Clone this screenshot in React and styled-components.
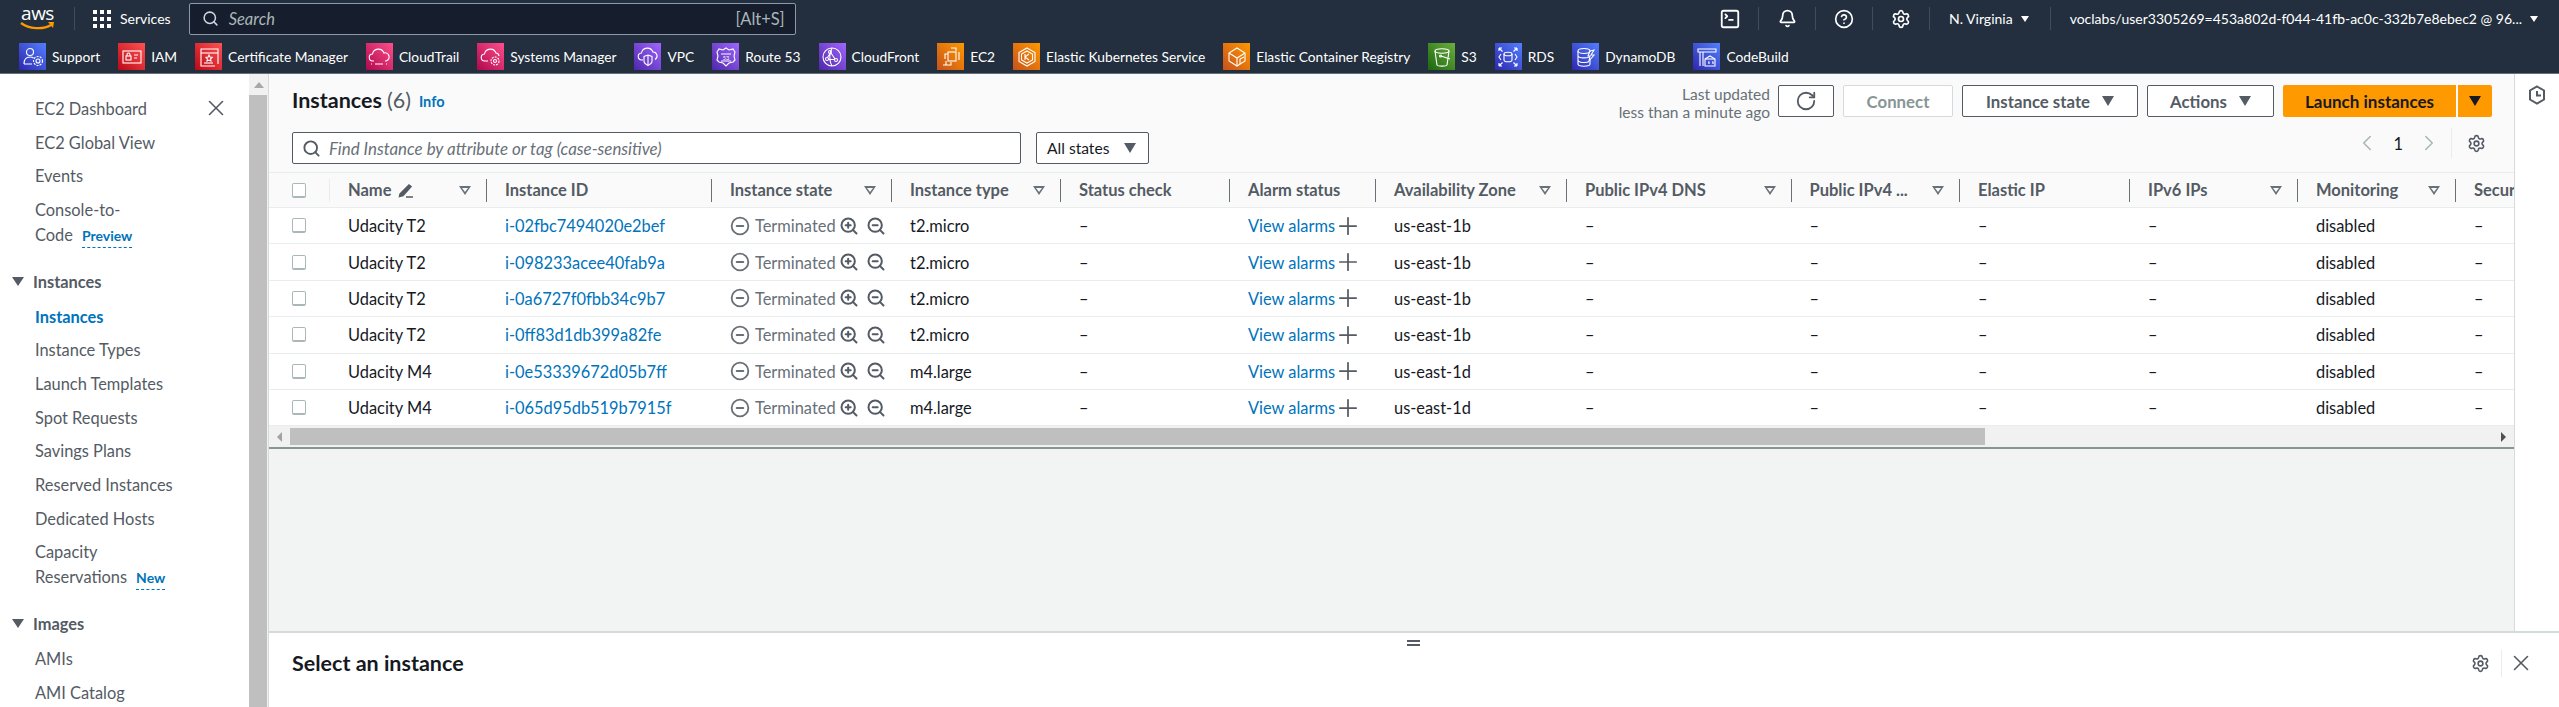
import React from 'react';
import styled, { createGlobalStyle } from 'styled-components';
import { Search, Bell, CircleHelp, Settings, RotateCw, ZoomIn, ZoomOut, CircleMinus, Plus, X, ChevronLeft, ChevronRight, SquareTerminal } from 'lucide-react';

const Global = createGlobalStyle`
  html, body { margin: 0; padding: 0; height: 100%; overflow: hidden; background: #fff; }
  * { box-sizing: border-box; }
  body { font-family: "Lato", "Liberation Sans", sans-serif; font-size: 16.4px; color: #16191f; }
`;

const Page = styled.div`display: flex; flex-direction: column; width: 2559px; height: 707px; overflow: hidden;`;

const Nav = styled.header`height: 74px; flex: none; background: #232f3e; border-bottom: 1px solid #687078; color: #fff; display: flex; flex-direction: column;`;
const NavTop = styled.div`height: 37px; display: flex; align-items: center; padding-left: 20px;`;
const Logo = styled.div`width: 35px; height: 26px; display: flex; flex-direction: column; align-items: center; flex: none;`;
const LogoText = styled.span`font: 400 19px/15px "Open Sans", sans-serif; letter-spacing: -0.5px; color: #fff;`;
const NavDivider = styled.span`width: 1px; height: 23px; background: #414d5c; flex: none; margin: ${p => p.$m || '0'};`;
const ServicesBtn = styled.div`display: flex; align-items: center; gap: 9px; font-size: 14px; margin-right: 18px;`;
const GridIcon = styled.div`display: grid; grid-template-columns: repeat(3, 4px); gap: 3px;`;
const GridDot = styled.i`width: 4px; height: 4px; background: #fff; display: block;`;
const SearchBox = styled.div`width: 607px; height: 32px; background: #161e2d; border: 1px solid #8d99a8; border-radius: 2px; display: flex; align-items: center; padding: 0 10px 0 12px; color: #aab7b8; flex: none; font-size: 16.5px;`;
const SearchHint = styled.span`font-style: italic; margin-left: 10px; flex: 1;`;
const NavRight = styled.div`margin-left: auto; display: flex; align-items: center; height: 100%; padding-right: 21px;`;
const NavIconBtn = styled.div`width: 56px; display: flex; justify-content: center; align-items: center; color: #fff;`;
const RegionText = styled.span`font-size: 14px; white-space: nowrap; color: #fff;`;
const MiniCaret = styled.span`width: 0; height: 0; border-left: 4px solid transparent; border-right: 4px solid transparent; border-top: 6px solid #fff; flex: none; margin-left: 8px;`;
const Shortcuts = styled.div`height: 36px; display: flex; align-items: flex-start; gap: 18px; padding: 6px 0 0 19px;`;
const Shortcut = styled.div`display: flex; align-items: center; gap: 6px; font-size: 13.75px; white-space: nowrap;`;
const Tile = styled.span`width: 27px; height: 27px; display: flex; align-items: center; justify-content: center; flex: none; background: linear-gradient(45deg, ${p => p.$a}, ${p => p.$b});`;

const Workspace = styled.div`flex: 1; display: flex; min-height: 0;`;
const Sidebar = styled.nav`width: 249px; flex: none; background: #fff; overflow: hidden; position: relative; padding: 22px 0 0 35px; color: #545b64;`;
const SideClose = styled.span`position: absolute; top: 21px; left: 203px; color: #545b64; display: flex;`;
const SideItem = styled.div`line-height: 25px; margin-bottom: 8.7px; white-space: nowrap; color: ${p => p.$active ? '#0073bb' : '#545b64'}; font-weight: ${p => p.$active ? 700 : 400};`;
const SideHead = styled.div`display: flex; align-items: center; font-weight: 700; line-height: 25px; margin: 20.5px 0 10px -23px; gap: 9px; color: #545b64;`;
const SideCaret = styled.span`width: 0; height: 0; border-left: 6px solid transparent; border-right: 6px solid transparent; border-top: 9px solid #545b64; flex: none;`;
const Badge = styled.span`color: #0073bb; font-weight: 700; font-size: 14px; margin-left: 9px; border-bottom: 1px dashed #0073bb; padding-bottom: 3px;`;

const VScroll = styled.div`width: 20px; flex: none; background: #f1f1f1; border-right: 1px solid #d5dbdb; display: flex; flex-direction: column; align-items: stretch;`;
const VArrow = styled.div`height: 21px; display: flex; justify-content: center; padding-top: 8px;`;
const UpTri = styled.span`width: 0; height: 0; border-left: 5px solid transparent; border-right: 5px solid transparent; border-bottom: 6px solid #a8a8a8;`;
const VThumb = styled.div`flex: 1; background: #bfbfbf; margin-right: 1px;`;

const Right = styled.div`flex: 1; min-width: 0; display: flex; flex-direction: column;`;
const Upper = styled.div`flex: 1; min-height: 0; display: flex;`;
const Main = styled.main`flex: 1; min-width: 0; background: #f2f3f3; overflow: hidden; display: flex; flex-direction: column;`;
const Rail = styled.aside`width: 45px; flex: none; background: #fff; border-left: 1px solid #d5dbdb; display: flex; justify-content: center; padding-top: 11px; color: #545b64;`;

const Panel = styled.section`background: #fafafa; border-bottom: 2px solid #879596;`;
const TitleRow = styled.div`height: 58px; display: flex; padding: 11px 22px 0 23px; align-items: flex-start;`;
const Title = styled.h1`margin: 3px 0 0; font-size: 21.5px; font-weight: 700; line-height: 24px; color: #16191f; white-space: nowrap;`;
const Count = styled.span`font-weight: 400; color: #545b64; margin-left: 5px;`;
const InfoLink = styled.a`font-size: 14.5px; font-weight: 700; color: #0073bb; margin: 8px 0 0 8px;`;
const Updated = styled.div`margin-left: auto; text-align: right; font-size: 15.5px; line-height: 18px; color: #687078; margin-right: 8px; white-space: nowrap;`;
const Button = styled.div`height: 32px; border: 1px solid ${p => p.$disabled ? '#d5dbdb' : '#545b64'}; border-radius: 2px; background: #fff; display: flex; align-items: center; justify-content: center; gap: 12px; width: ${p => p.$w}px; margin-right: 9px; font-size: 16.8px; font-weight: 700; color: ${p => p.$disabled ? '#879596' : '#545b64'}; flex: none;`;
const Launch = styled.div`height: 32px; display: flex; gap: 2px; flex: none;`;
const LaunchMain = styled.div`width: 173px; background: #f90; border-radius: 2px 0 0 2px; display: flex; align-items: center; justify-content: center; font-size: 17px; font-weight: 700; color: #16191f;`;
const LaunchCaret = styled.div`width: 34px; background: #f90; border-radius: 0 2px 2px 0; display: flex; align-items: center; justify-content: center;`;
const Tri = styled.span`width: 0; height: 0; border-left: 6px solid transparent; border-right: 6px solid transparent; border-top: 10px solid ${p => p.$c || '#545b64'}; flex: none;`;
const FilterRow = styled.div`height: 40px; display: flex; padding: 0 28px 0 23px; align-items: flex-start;`;
const FilterInput = styled.div`width: 729px; height: 32px; background: #fff; border: 1px solid #545b64; border-radius: 2px; display: flex; align-items: center; padding: 0 9px; gap: 8px; color: #687078; font-style: italic; font-size: 16.9px;`;
const StateSelect = styled.div`width: 113px; height: 32px; margin-left: 15px; background: #fff; border: 1px solid #545b64; border-radius: 2px; display: flex; align-items: center; justify-content: space-between; padding: 0 12px 0 10px; color: #16191f; font-size: 15.6px;`;
const Pager = styled.div`margin-left: auto; display: flex; align-items: center; height: 26px; margin-top: -2px; color: #aab7b8;`;
const PageNum = styled.span`color: #16191f; margin: 0 13px;`;
const PagerGear = styled.span`color: #545b64; border-left: 1px solid #eaeded; margin-left: 9px; padding-left: 15px; display: flex; height: 30px; align-items: center;`;

const cols = '61px 157px 225px 180px 169px 169px 146px 191px 224.5px 168.5px 170px 168px 158px 220px';
const HeadRow = styled.div`display: grid; grid-template-columns: ${cols}; height: 36px; align-items: center; border-top: 1px solid #eaeded; border-bottom: 1px solid #eaeded; background: #fafafa;`;
const HeadCell = styled.div`height: 23px; padding: 0 15px 0 18px; display: flex; align-items: center; justify-content: space-between; border-right: 1px solid #687078; font-size: 16.5px; font-weight: 700; color: #545b64; white-space: nowrap; min-width: 0;`;
const CheckHead = styled.div`height: 23px; display: flex; align-items: center; border-right: 1px solid #eaeded;`;
const HeadLabel = styled.span`display: flex; align-items: center; gap: 6px;`;
const Row = styled.div`display: grid; grid-template-columns: ${cols}; height: 36.4px; align-items: center; background: #fff; border-bottom: 1px solid #eaeded;`;
const Cell = styled.div`padding-left: 18px; white-space: nowrap; color: ${p => p.$link ? '#0073bb' : '#16191f'}; display: flex; align-items: center;`;
const Check = styled.span`display: block; width: 14px; height: 15px; background: #fff; border: 1px solid #aab7b8; border-bottom-width: 2px; border-radius: 2px; margin-left: 23px;`;
const TermText = styled.span`color: #687078; margin: 0 3px 0 5px;`;
const StateIcons = styled.span`display: flex; align-items: center; gap: 7px; color: #545b64;`;
const AlarmPlus = styled(Plus)`margin-left: -1px; color: #545b64; flex: none;`;

const HScroll = styled.div`height: 21px; display: flex; background: #f1f1f1; align-items: center; justify-content: space-between;`;
const HLeft = styled.div`display: flex; align-items: center; height: 100%;`;
const ArrowBox = styled.div`width: 21px; display: flex; align-items: center; justify-content: center;`;
const SideTri = styled.span`width: 0; height: 0; border-top: 5px solid transparent; border-bottom: 5px solid transparent; ${p => p.$right ? 'border-left: 5px solid #505050;' : 'border-right: 5px solid #a3a3a3;'}`;
const HThumb = styled.div`width: 1695px; height: 17px; background: #bfbfbf;`;

const Split = styled.section`height: 76px; flex: none; background: #fff; border-top: 2px solid #d5dbdb; position: relative; display: flex; align-items: center; justify-content: space-between; padding: 0 25px 14px 23px;`;
const SplitTitle = styled.h2`margin: 0; font-size: 21.5px; font-weight: 700; color: #16191f;`;
const Grip = styled.div`position: absolute; left: 1138px; top: 7px; width: 13px; height: 6px; border-top: 2px solid #545b64; border-bottom: 2px solid #545b64;`;
const SplitTools = styled.div`display: flex; align-items: center; color: #545b64;`;
const ToolDivider = styled.span`width: 1px; height: 27px; background: #eaeded; margin: 0 6px 0 11px;`;

const iconProps = { fill: 'none', stroke: '#fff', strokeWidth: 1.1 };
const Glyph = ({ children }) => <svg width="22" height="22" viewBox="0 0 22 22" {...iconProps}>{children}</svg>;

const shortcuts = [
  ['Support', '#2e27ad', '#527fff', <Glyph><circle cx="8" cy="6" r="3.5"/><path d="M2 18c0-5 2-7 6-7 1.500 0 2.500.3 3.500 1M2 18h8"/><circle cx="16" cy="15" r="2"/><circle cx="16" cy="15" r="4.500" strokeDasharray="2 1.200"/></Glyph>],
  ['IAM', '#bd0816', '#ff5252', <Glyph><rect x="2" y="5" width="18" height="12"/><rect x="5" y="10" width="5" height="4"/><path d="M6 10V8.500a1.500 1.500 0 013 0V10M13 9h4M13 12h3"/></Glyph>],
  ['Certificate Manager', '#bd0816', '#ff5252', <Glyph><path d="M20 18V3H3v17h14"/><path d="M3 7h17"/><path d="M11 9l1 2 2.200.3-1.600 1.500.4 2.200-2-1-2 1 .4-2.200L8 11.300l2.200-.3z"/><path d="M6 17h9"/></Glyph>],
  ['CloudTrail', '#b0084d', '#ff4f8b', <Glyph><path d="M6 15H5a3.500 3.500 0 01-.5-7 6 6 0 0111.500-1 4 4 0 012 8h-1"/><path d="M3 18h1M7 18h8M18 18h1" /></Glyph>],
  ['Systems Manager', '#b0084d', '#ff4f8b', <Glyph><path d="M8 15H5a3.500 3.500 0 01-.5-7 6 6 0 0111.500-1 3.500 3.500 0 013 3"/><circle cx="15" cy="15" r="1.500"/><circle cx="15" cy="15" r="4" strokeDasharray="2 1"/></Glyph>],
  ['VPC', '#4d27aa', '#a166ff', <Glyph><path d="M6 14H5a3.500 3.500 0 01-.5-7 6 6 0 0111.500-1 4 4 0 012 7.500"/><path d="M11 9l4 1.500V15c0 2-2 3.500-4 4.500-2-1-4-2.500-4-4.500v-4.500z"/><path d="M11 9v10"/></Glyph>],
  ['Route 53', '#4d27aa', '#a166ff', <Glyph><path d="M11 2l3 2 4-1 2 3-1 4 1 4-2 2-4 1-3 3-3-3-4-1-2-2 1-4-1-4 2-3 4 1z"/><path d="M6 8h10M6 15h10"/><text x="11" y="13.500" fontSize="5.500" textAnchor="middle" fill="#fff" stroke="none">53</text></Glyph>],
  ['CloudFront', '#4d27aa', '#a166ff', <Glyph><circle cx="11" cy="11" r="9"/><circle cx="9" cy="6" r="1.500"/><circle cx="6" cy="13" r="1.500"/><circle cx="15" cy="14" r="1.500"/><path d="M9 7.500l-2.500 4M10 7l4 6M7.500 13.500h6M11 2c-3 5-3 13 0 18"/></Glyph>],
  ['EC2', '#c8511b', '#f90', <Glyph><rect x="8" y="6" width="8" height="9"/><path d="M8 8H5v5M16 5V2h-5M6 19v-4M3 19h8v-3M19 6v8"/></Glyph>],
  ['Elastic Kubernetes Service', '#c8511b', '#f90', <Glyph><path d="M11 2l8 4.500v9L11 20l-8-4.500v-9z"/><path d="M11 5l5.500 3v6L11 17l-5.500-3V8z"/><path d="M9 8v6M13 8l-4 3 4 3"/></Glyph>],
  ['Elastic Container Registry', '#c8511b', '#f90', <Glyph><path d="M11 2l8 5v8l-8 5-8-5V7z"/><path d="M3 7l8 5 8-5M11 12v8"/><path d="M14 18v-5l4-2"/></Glyph>],
  ['S3', '#1b660f', '#6cae3e', <Glyph><path d="M4 5c0-3 14-3 14 0l-2 14c-1 1.500-9 1.500-10 0z"/><path d="M4 5c0 3 14 3 14 0"/><path d="M10 10l9 3" /><circle cx="9.500" cy="10" r="1"/></Glyph>],
  ['RDS', '#2e27ad', '#527fff', <Glyph><ellipse cx="11" cy="8" rx="4" ry="1.800"/><path d="M7 8v6c0 2.400 8 2.400 8 0V8"/><path d="M2 2l3.500 3.500M2 2h3M2 2v3M20 2l-3.500 3.500M20 2h-3M20 2v3M2 20l3.500-3.500M2 20h3M2 20v-3M20 20l-3.500-3.500M20 20h-3M20 20v-3M4 8l-2 3 2 3M18 8l2 3-2 3"/></Glyph>],
  ['DynamoDB', '#2e27ad', '#527fff', <Glyph><ellipse cx="9" cy="5" rx="6" ry="2.500"/><path d="M3 5v13c0 3 12 3 12 0v-4M3 9.500c0 3 10 3 11.500 1M3 14c0 3 9 3 11 1.500"/><path d="M15 5l4-1-3 5h3l-5 6 1-5h-2z"/></Glyph>],
  ['CodeBuild', '#2e27ad', '#527fff', <Glyph><path d="M2 3h18v3H2zM4 6v14M7 6v14"/><path d="M9 13l5-3 5 3v7H9z"/><path d="M9 13h10"/><path d="M12 16h1v2M16 16h1v2"/></Glyph>],
];

const GearIcon = ({ size = 18 }) => <Settings size={size} strokeWidth={2} />;

const Pencil = () => (
  <svg width="16" height="16" viewBox="0 0 16 16" fill="none" stroke="#545b64" strokeWidth="1.500">
    <path d="M2 12L11 3l2 1.500L5 13.500 1.500 14.500z" fill="#545b64" />
    <path d="M8 15h7" />
  </svg>
);

const RailIcon = () => (
  <svg width="20" height="20" viewBox="0 0 20 20" fill="none" stroke="#545b64" strokeWidth="2">
    <path d="M10 1.500l7 4v9l-7 4-7-4v-9z" />
    <path d="M10 6v4.500h4" />
  </svg>
);

const HeadFilter = styled.span`width: 0; height: 0; border-left: 6px solid transparent; border-right: 6px solid transparent; border-top: 9px solid #687078; flex: none; position: relative;
  &::after { content: ""; position: absolute; left: -3px; top: -7px; border-left: 3px solid transparent; border-right: 3px solid transparent; border-top: 4px solid #fafafa; }`;

const heads = [
  ['Name', true, true], ['Instance ID'], ['Instance state', true], ['Instance type', true], ['Status check'], ['Alarm status'],
  ['Availability Zone', true], ['Public IPv4 DNS', true], ['Public IPv4 ...', true], ['Elastic IP'], ['IPv6 IPs', true], ['Monitoring', true], ['Security group name'],
];

const rows = [
  ['Udacity T2', 'i-02fbc7494020e2bef', 't2.micro', 'us-east-1b'],
  ['Udacity T2', 'i-098233acee40fab9a', 't2.micro', 'us-east-1b'],
  ['Udacity T2', 'i-0a6727f0fbb34c9b7', 't2.micro', 'us-east-1b'],
  ['Udacity T2', 'i-0ff83d1db399a82fe', 't2.micro', 'us-east-1b'],
  ['Udacity M4', 'i-0e53339672d05b7ff', 'm4.large', 'us-east-1d'],
  ['Udacity M4', 'i-065d95db519b7915f', 'm4.large', 'us-east-1d'],
];

export default function App() {
  return (
    <Page>
      <Global />
      <Nav>
        <NavTop>
          <Logo>
            <LogoText>aws</LogoText>
            <svg width="35" height="10" viewBox="0 0 35 10" fill="none">
              <path d="M1 2c8 6 22 7 30 2" stroke="#f90" strokeWidth="2.200" />
              <path d="M28 1l6 0-1 6z" fill="#f90" />
            </svg>
          </Logo>
          <NavDivider $m="0 18px 0 19px" />
          <ServicesBtn>
            <GridIcon>{Array.from({ length: 9 }, (_, i) => <GridDot key={i} />)}</GridIcon>
            Services
          </ServicesBtn>
          <SearchBox>
            <Search size={17} color="#d1d5db" strokeWidth={2.200} />
            <SearchHint>Search</SearchHint>
            <span>[Alt+S]</span>
          </SearchBox>
          <NavRight>
            <NavIconBtn><SquareTerminal size={22} /></NavIconBtn>
            <NavDivider />
            <NavIconBtn><Bell size={19} strokeWidth={2.200} /></NavIconBtn>
            <NavDivider />
            <NavIconBtn><CircleHelp size={20} /></NavIconBtn>
            <NavDivider />
            <NavIconBtn><GearIcon size={20} /></NavIconBtn>
            <NavDivider $m="0 19px 0 0" />
            <RegionText>N. Virginia</RegionText>
            <MiniCaret />
            <NavDivider $m="0 19px 0 21px" />
            <RegionText>voclabs/user3305269=453a802d-f044-41fb-ac0c-332b7e8ebec2 @ 96...</RegionText>
            <MiniCaret />
          </NavRight>
        </NavTop>
        <Shortcuts>
          {shortcuts.map(([name, a, b, g]) => (
            <Shortcut key={name}><Tile $a={a} $b={b}>{g}</Tile>{name}</Shortcut>
          ))}
        </Shortcuts>
      </Nav>
      <Workspace>
        <Sidebar>
          <SideClose><X size={26} strokeWidth={1.500} /></SideClose>
          <SideItem>EC2 Dashboard</SideItem>
          <SideItem>EC2 Global View</SideItem>
          <SideItem>Events</SideItem>
          <SideItem>Console-to-<br />Code<Badge>Preview</Badge></SideItem>
          <SideHead><SideCaret />Instances</SideHead>
          <SideItem $active>Instances</SideItem>
          <SideItem>Instance Types</SideItem>
          <SideItem>Launch Templates</SideItem>
          <SideItem>Spot Requests</SideItem>
          <SideItem>Savings Plans</SideItem>
          <SideItem>Reserved Instances</SideItem>
          <SideItem>Dedicated Hosts</SideItem>
          <SideItem>Capacity<br />Reservations<Badge>New</Badge></SideItem>
          <SideHead><SideCaret />Images</SideHead>
          <SideItem>AMIs</SideItem>
          <SideItem>AMI Catalog</SideItem>
        </Sidebar>
        <VScroll>
          <VArrow><UpTri /></VArrow>
          <VThumb />
        </VScroll>
        <Right>
          <Upper>
            <Main>
              <Panel>
                <TitleRow>
                  <Title>Instances<Count>(6)</Count></Title>
                  <InfoLink>Info</InfoLink>
                  <Updated>Last updated<br />less than a minute ago</Updated>
                  <Button $w={56}><RotateCw size={22} /></Button>
                  <Button $w={110} $disabled>Connect</Button>
                  <Button $w={176}>Instance state<Tri /></Button>
                  <Button $w={127}>Actions<Tri /></Button>
                  <Launch>
                    <LaunchMain>Launch instances</LaunchMain>
                    <LaunchCaret><Tri $c="#16191f" /></LaunchCaret>
                  </Launch>
                </TitleRow>
                <FilterRow>
                  <FilterInput><Search size={19} color="#545b64" strokeWidth={2.400} />Find Instance by attribute or tag (case-sensitive)</FilterInput>
                  <StateSelect>All states<Tri /></StateSelect>
                  <Pager>
                    <ChevronLeft size={26} strokeWidth={1.500} />
                    <PageNum>1</PageNum>
                    <ChevronRight size={26} strokeWidth={1.500} />
                    <PagerGear><GearIcon size={19} /></PagerGear>
                  </Pager>
                </FilterRow>
                <HeadRow>
                  <CheckHead><Check /></CheckHead>
                  {heads.map(([label, filter, edit]) => (
                    <HeadCell key={label}>
                      <HeadLabel>{label}{edit && <Pencil />}</HeadLabel>
                      {filter && <HeadFilter />}
                    </HeadCell>
                  ))}
                </HeadRow>
                {rows.map(([name, id, type, az]) => (
                  <Row key={id}>
                    <Check />
                    <Cell>{name}</Cell>
                    <Cell $link>{id}</Cell>
                    <Cell>
                      <CircleMinus size={20} color="#687078" strokeWidth={2.200} />
                      <TermText>Terminated</TermText>
                      <StateIcons><ZoomIn size={20} strokeWidth={2.400} /><ZoomOut size={20} strokeWidth={2.400} /></StateIcons>
                    </Cell>
                    <Cell>{type}</Cell>
                    <Cell>–</Cell>
                    <Cell $link>View alarms<AlarmPlus size={28} strokeWidth={1.500} /></Cell>
                    <Cell>{az}</Cell>
                    <Cell>–</Cell>
                    <Cell>–</Cell>
                    <Cell>–</Cell>
                    <Cell>–</Cell>
                    <Cell>disabled</Cell>
                    <Cell>–</Cell>
                  </Row>
                ))}
                <HScroll>
                  <HLeft><ArrowBox><SideTri /></ArrowBox><HThumb /></HLeft>
                  <ArrowBox><SideTri $right /></ArrowBox>
                </HScroll>
              </Panel>
            </Main>
            <Rail><RailIcon /></Rail>
          </Upper>
          <Split>
            <Grip />
            <SplitTitle>Select an instance</SplitTitle>
            <SplitTools><GearIcon size={19} /><ToolDivider /><X size={26} strokeWidth={1.500} /></SplitTools>
          </Split>
        </Right>
      </Workspace>
    </Page>
  );
}
